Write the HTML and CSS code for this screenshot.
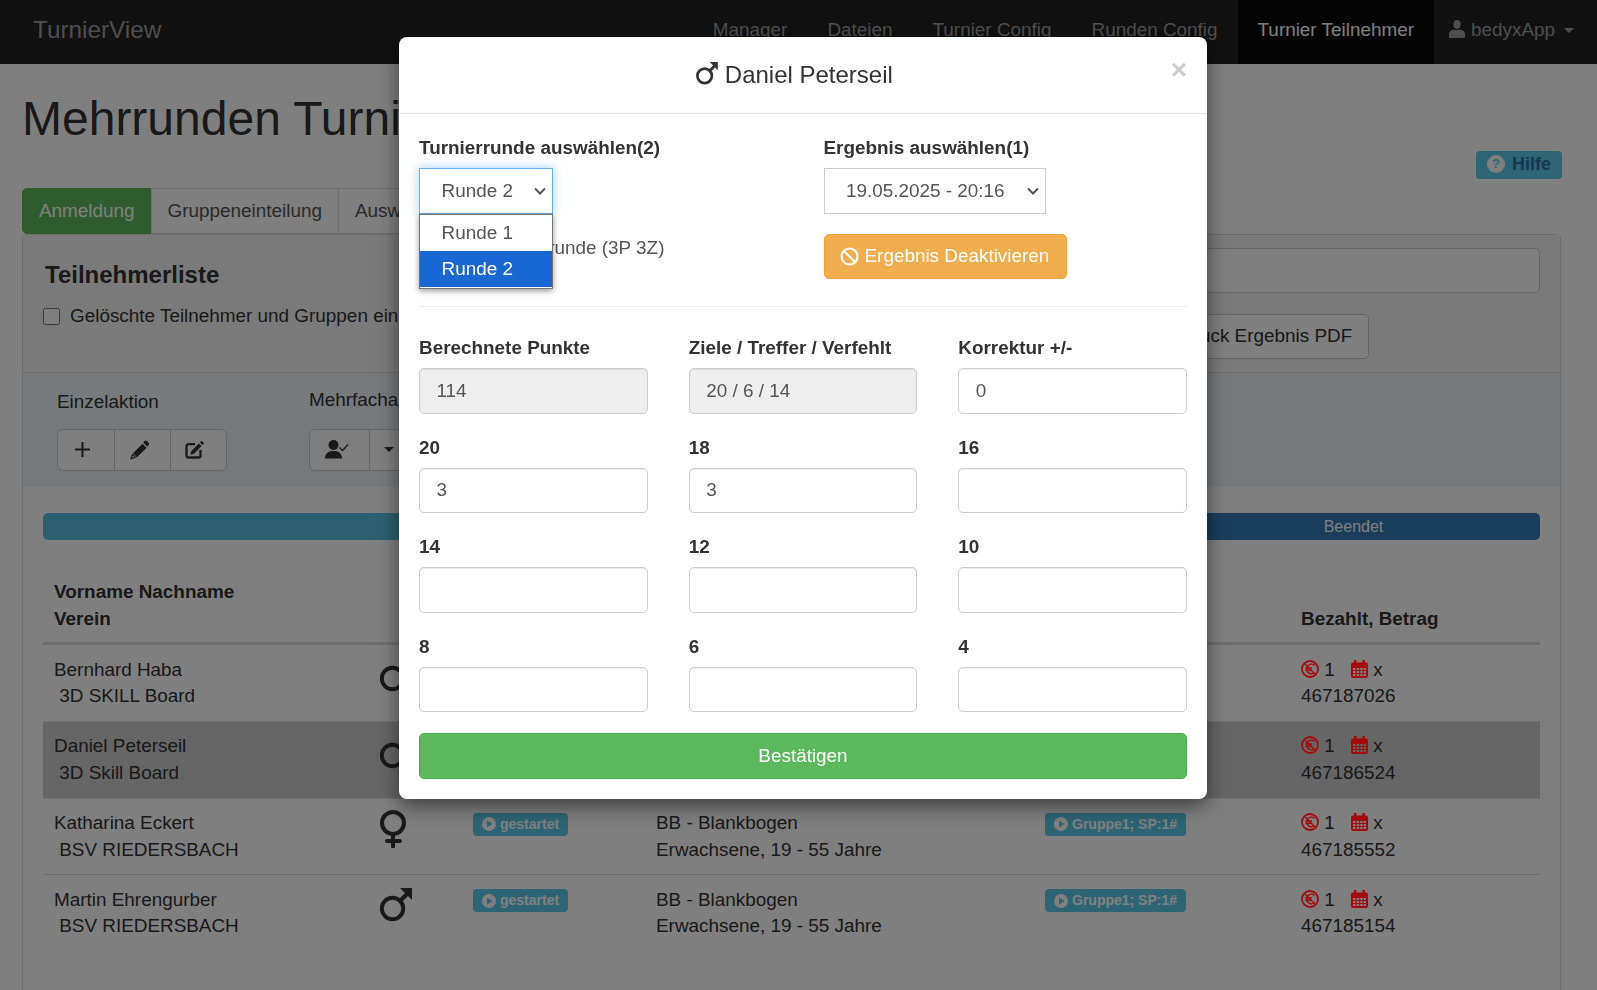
FILE: index.html
```html
<!DOCTYPE html>
<html lang="de">
<head>
    <meta charset="UTF-8">
    <title>TurnierView</title>
    <link rel="stylesheet" href="styles.css">
</head>
<body>
    <svg class="sprite" xmlns="http://www.w3.org/2000/svg">
        <symbol id="i-mars" viewBox="0 0 32 34">
            <circle cx="12.5" cy="20.5" r="10.7" fill="none" stroke="currentColor" stroke-width="4"/>
            <path d="M20 0h12v12l-4-4-7 7-3-3 7-7z" fill="currentColor"/>
        </symbol>
        <symbol id="i-venus" viewBox="0 0 28 38">
            <circle cx="13" cy="13" r="11" fill="none" stroke="currentColor" stroke-width="4"/>
            <path d="M13 24v12.500M7 31h13" fill="none" stroke="currentColor" stroke-width="4" stroke-linecap="round"/>
        </symbol>
        <symbol id="i-euro" viewBox="0 0 18 18">
            <circle cx="9" cy="9" r="8" fill="none" stroke="currentColor" stroke-width="1.800"/>
            <path d="M13.500 5.500a4.700 4.700 0 1 0 0 7M4.500 8h6.500M4.500 10.300h5.500" fill="none" stroke="currentColor" stroke-width="1.500"/>
            <path d="M4 4l10 10" fill="none" stroke="currentColor" stroke-width="1.200"/>
        </symbol>
        <symbol id="i-cal" viewBox="0 0 17 18">
            <path fill-rule="evenodd" fill="currentColor" d="M3 0h2.500v2.500h6V0H14v2.500h1a2 2 0 0 1 2 2V16a2 2 0 0 1-2 2H2a2 2 0 0 1-2-2V4.500a2 2 0 0 1 2-2h1zM2 8v2h2.500V8zM5.700 8v2h2.500V8zM9.200 8v2h2.500V8zM12.700 8v2H15V8zM2 11v2h2.500v-2zM5.700 11v2h2.500v-2zM9.200 11v2h2.500v-2zM12.700 11v2H15v-2zM2 14v2h2.500v-2zM5.700 14v2h2.500v-2zM9.200 14v2h2.500v-2zM12.700 14v2H15v-2z"/>
        </symbol>
        <symbol id="i-play" viewBox="0 0 14 14">
            <path fill-rule="evenodd" fill="currentColor" d="M7 0a7 7 0 1 0 0 14A7 7 0 0 0 7 0zM5 3.500L10.500 7 5 10.500z"/>
        </symbol>
    </svg>

    <div class="page">
        <nav class="navbar">
            <a class="brand">TurnierView</a>
            <ul class="nav">
                <li>Manager</li>
                <li>Dateien</li>
                <li>Turnier Config</li>
                <li>Runden Config</li>
                <li class="active">Turnier Teilnehmer</li>
                <li class="user">
                    <svg class="user-icon" viewBox="0 0 16 18"><path fill="currentColor" d="M8 0c2.300 0 3.700 1.800 3.700 4.300S10.300 9 8 9 4.300 6.800 4.300 4.300 5.700 0 8 0zM5 9.500c1.800 1 4.200 1 6 0 3 .7 5 2 5 4.500v4H0v-4c0-2.500 2-3.800 5-4.500z"/></svg>
                    bedyxApp <span class="caret"></span>
                </li>
            </ul>
        </nav>

        <main class="content">
            <div class="title-row">
                <h1>Mehrrunden Turnier</h1>
                <a class="btn-help"><span class="help-dot">?</span> Hilfe</a>
            </div>

            <div class="tabs">
                <a class="tab active">Anmeldung</a>
                <a class="tab">Gruppeneinteilung</a>
                <a class="tab">Auswertung</a>
            </div>

            <section class="panel">
                <div class="panel-head">
                    <div>
                        <h3>Teilnehmerliste</h3>
                        <label class="check"><input type="checkbox"> Gelöschte Teilnehmer und Gruppen einblenden</label>
                    </div>
                    <div class="head-right">
                        <input class="search" type="text">
                        <a class="btn">Druck Ergebnis PDF</a>
                    </div>
                </div>

                <div class="actions">
                    <div class="action-col">
                        <span class="action-label">Einzelaktion</span>
                        <div class="btn-group">
                            <a class="tool">
                                <svg width="15" height="15" viewBox="0 0 15 15"><path d="M7.500 0v15M0 7.500h15" stroke="currentColor" stroke-width="2"/></svg>
                            </a>
                            <a class="tool tool-mid">
                                <svg width="19" height="20" viewBox="0 0 19 20"><path fill="currentColor" d="M14.200 1.200a2 2 0 0 1 2.800 0l1.400 1.400a2 2 0 0 1 0 2.800l-1.200 1.200-4-4zM12.500 3.800l4 4-9.500 9.500-4-4z"/><path fill="none" stroke="currentColor" stroke-width="1.200" d="M2.600 14.500L1 18.800l4.300-1.600z"/></svg>
                            </a>
                            <a class="tool">
                                <svg width="20" height="19" viewBox="0 0 20 19"><path fill="none" stroke="currentColor" stroke-width="2.300" d="M10 4.200H3.500a2 2 0 0 0-2 2V15.500a2 2 0 0 0 2 2h10a2 2 0 0 0 2-2v-5.500"/><path fill="currentColor" d="M16.500.8l2.700 2.700-1.600 1.600-2.700-2.700zM13.900 3.400l2.700 2.700-7.500 7.600-3.700 1 1-3.700z"/></svg>
                            </a>
                        </div>
                    </div>
                    <div class="action-col action-multi">
                        <span class="action-label">Mehrfachaktion</span>
                        <div class="btn-group">
                            <a class="tool tool-wide">
                                <svg width="24" height="19" viewBox="0 0 24 19"><circle cx="8.500" cy="5" r="5" fill="currentColor"/><path fill="currentColor" d="M0 18.500c0-5 3-7.500 8.500-7.500s8.500 2.500 8.500 7.500z"/><path fill="none" stroke="currentColor" stroke-width="1.300" d="M14.500 7.500l3 3 5.500-6"/></svg>
                            </a>
                            <a class="tool tool-caret"><span class="caret"></span></a>
                        </div>
                    </div>
                </div>

                <div class="list">
                    <div class="progress">
                        <div class="bar bar-info"></div>
                        <div class="bar bar-done">Beendet</div>
                    </div>

                    <table class="list-table">
                        <colgroup>
                            <col class="c-name"><col class="c-sex"><col class="c-state"><col class="c-class"><col class="c-group"><col class="c-pay">
                        </colgroup>
                        <thead>
                            <tr>
                                <th>Vorname Nachname<br>Verein</th>
                                <th></th>
                                <th>Status</th>
                                <th>Klasse<br>Altersgruppe</th>
                                <th>Gruppe</th>
                                <th>Bezahlt, Betrag</th>
                            </tr>
                        </thead>
                        <tbody>
                            <tr>
                                <td>Bernhard Haba<br>&nbsp;3D SKILL Board</td>
                                <td><svg class="sex mars"><use href="#i-mars"/></svg></td>
                                <td><span class="badge"><svg class="play"><use href="#i-play"/></svg>gestartet</span></td>
                                <td>BB - Blankbogen<br>Erwachsene, 19 - 55 Jahre</td>
                                <td><span class="badge"><svg class="play"><use href="#i-play"/></svg>Gruppe1; SP:1#</span></td>
                                <td><svg class="ic-euro"><use href="#i-euro"/></svg> 1 <svg class="ic-cal"><use href="#i-cal"/></svg> x<br>467187026</td>
                            </tr>
                            <tr class="selected">
                                <td>Daniel Peterseil<br>&nbsp;3D Skill Board</td>
                                <td><svg class="sex mars"><use href="#i-mars"/></svg></td>
                                <td><span class="badge"><svg class="play"><use href="#i-play"/></svg>gestartet</span></td>
                                <td>BB - Blankbogen<br>Erwachsene, 19 - 55 Jahre</td>
                                <td><span class="badge"><svg class="play"><use href="#i-play"/></svg>Gruppe1; SP:1#</span></td>
                                <td><svg class="ic-euro"><use href="#i-euro"/></svg> 1 <svg class="ic-cal"><use href="#i-cal"/></svg> x<br>467186524</td>
                            </tr>
                            <tr>
                                <td>Katharina Eckert<br>&nbsp;BSV RIEDERSBACH</td>
                                <td><svg class="sex venus"><use href="#i-venus"/></svg></td>
                                <td><span class="badge"><svg class="play"><use href="#i-play"/></svg>gestartet</span></td>
                                <td>BB - Blankbogen<br>Erwachsene, 19 - 55 Jahre</td>
                                <td><span class="badge"><svg class="play"><use href="#i-play"/></svg>Gruppe1; SP:1#</span></td>
                                <td><svg class="ic-euro"><use href="#i-euro"/></svg> 1 <svg class="ic-cal"><use href="#i-cal"/></svg> x<br>467185552</td>
                            </tr>
                            <tr>
                                <td>Martin Ehrengurber<br>&nbsp;BSV RIEDERSBACH</td>
                                <td><svg class="sex mars"><use href="#i-mars"/></svg></td>
                                <td><span class="badge"><svg class="play"><use href="#i-play"/></svg>gestartet</span></td>
                                <td>BB - Blankbogen<br>Erwachsene, 19 - 55 Jahre</td>
                                <td><span class="badge"><svg class="play"><use href="#i-play"/></svg>Gruppe1; SP:1#</span></td>
                                <td><svg class="ic-euro"><use href="#i-euro"/></svg> 1 <svg class="ic-cal"><use href="#i-cal"/></svg> x<br>467185154</td>
                            </tr>
                        </tbody>
                    </table>
                </div>
            </section>
        </main>
    </div>

    <div class="backdrop"></div>

    <div class="modal">
        <div class="modal-head">
            <span></span>
            <h4><svg class="title-icon"><use href="#i-mars"/></svg> Daniel Peterseil</h4>
            <span class="close">&times;</span>
        </div>
        <div class="modal-body">
            <div class="pick-row">
                <div>
                    <label class="field-label">Turnierrunde auswählen(2)</label>
                    <div class="select-wrap">
                        <select class="select select-round focused"><option>Runde 1</option><option selected>Runde 2</option></select>
                        <ul class="listbox">
                            <li>Runde 1</li>
                            <li class="current">Runde 2</li>
                        </ul>
                    </div>
                    <p class="round-type">Aktuell Turnierrunde (3P 3Z)</p>
                </div>
                <div>
                    <label class="field-label">Ergebnis auswählen(1)</label>
                    <select class="select select-result"><option>19.05.2025 - 20:16</option></select>
                    <a class="btn-warn">
                        <svg width="19" height="19" viewBox="0 0 19 19"><circle cx="9.500" cy="9.500" r="8" fill="none" stroke="currentColor" stroke-width="2.200"/><path d="M4 4l11 11" stroke="currentColor" stroke-width="2.200"/></svg>
                        Ergebnis Deaktivieren
                    </a>
                </div>
            </div>
            <hr class="divider">
            <div class="field-grid">
                <div><label class="field-label">Berechnete Punkte</label><input class="input" value="114" disabled></div>
                <div><label class="field-label">Ziele / Treffer / Verfehlt</label><input class="input" value="20 / 6 / 14" disabled></div>
                <div><label class="field-label">Korrektur +/-</label><input class="input" value="0"></div>
                <div><label class="field-label">20</label><input class="input" value="3"></div>
                <div><label class="field-label">18</label><input class="input" value="3"></div>
                <div><label class="field-label">16</label><input class="input"></div>
                <div><label class="field-label">14</label><input class="input"></div>
                <div><label class="field-label">12</label><input class="input"></div>
                <div><label class="field-label">10</label><input class="input"></div>
                <div><label class="field-label">8</label><input class="input"></div>
                <div><label class="field-label">6</label><input class="input"></div>
                <div><label class="field-label">4</label><input class="input"></div>
            </div>
            <a class="btn-ok">Bestätigen</a>
        </div>
    </div>
</body>
</html>
```

FILE: styles.css
```css
* {
    box-sizing: border-box;
}
html, body {
    height: 100%;
}
body {
    margin: 0;
    overflow: hidden;
    background-color: #fff;
    color: #333;
    font-family: "Liberation Sans", Arial, sans-serif;
    font-size: 18.9px;
    line-height: 26.67px;
}
.sprite {
    position: absolute;
    width: 0;
    height: 0;
}
.page {
    display: flex;
    flex-direction: column;
    height: 100vh;
}
.caret {
    display: inline-block;
    width: 0;
    height: 0;
    margin-left: 3px;
    vertical-align: middle;
    border-top: 5px solid;
    border-left: 5px solid transparent;
    border-right: 5px solid transparent;
}

/* navbar */
.navbar {
    display: flex;
    justify-content: space-between;
    align-items: stretch;
    height: 64px;
    flex-shrink: 0;
    background-color: #222;
    padding: 0 3px 0 33px;
}
.brand {
    align-self: center;
    margin-bottom: 3px;
    color: #9d9d9d;
    font-size: 24.3px;
}
.nav {
    display: flex;
    margin: 0;
    padding: 0;
    list-style: none;
}
.nav li {
    display: flex;
    align-items: center;
    padding: 0 20px 3px;
    color: #9d9d9d;
}
.nav li.active {
    background-color: #080808;
    color: #fff;
}
.nav li.user {
    padding: 0 20px 3px 15px;
    gap: 6px;
}
.user-icon {
    width: 16px;
    height: 18px;
    margin-top: -3px;
}

/* title */
.content {
    display: flex;
    flex-direction: column;
    flex: 1;
    padding: 0 36px 0 22px;
    min-height: 0;
}
.title-row {
    display: flex;
    justify-content: space-between;
    height: 124px;
    flex-shrink: 0;
}
h1 {
    margin: 28px 0 0;
    font-size: 48px;
    font-weight: 500;
    line-height: 53px;
}
.btn-help {
    display: flex;
    align-items: center;
    gap: 7px;
    align-self: flex-end;
    height: 28px;
    margin: 0 -1px 9px 0;
    padding: 0 11px 2px;
    border-radius: 4px;
    background-color: #5bcbe9;
    color: #2f6fa8;
    font-size: 18px;
    font-weight: bold;
}
.help-dot {
    width: 18px;
    height: 18px;
    border-radius: 50%;
    background-color: #fff;
    color: #5bcbe9;
    font-size: 13px;
    line-height: 18px;
    text-align: center;
}

/* tabs */
.tabs {
    display: flex;
    flex-shrink: 0;
}
.tab {
    height: 46px;
    padding: 9px 16px;
    background-color: #fff;
    border: 1px solid #ddd;
    margin-right: -1px;
    color: #555;
}
.tab.active {
    background-color: #5cb85c;
    border-color: #5cb85c;
    border-radius: 5px 0 0 5px;
    color: #fff;
}

/* panel */
.panel {
    flex: 1;
    border: 1px solid #ddd;
    border-bottom: 0;
    border-radius: 5px 5px 0 0;
}
.panel-head {
    display: flex;
    justify-content: space-between;
    height: 138px;
    padding: 13px 20px 0 22px;
    background-color: #f5f5f5;
    border-bottom: 1px solid #ddd;
}
h3 {
    margin: 13px 0 14px;
    font-size: 24px;
    line-height: 28px;
}
.check {
    display: flex;
    align-items: center;
    gap: 10px;
    margin-left: -2px;
}
.check input {
    width: 17px;
    height: 17px;
    margin: 0;
}
.head-right {
    display: flex;
    flex-direction: column;
    align-items: flex-start;
    width: 377px;
}
.search {
    width: 100%;
    height: 45px;
    background-color: #fff;
    border: 1px solid #ccc;
    border-radius: 5px;
}
.btn {
    height: 45px;
    margin-top: 21px;
    padding: 8px 16px;
    background-color: #fff;
    border: 1px solid #ccc;
    border-radius: 5px;
    white-space: nowrap;
}
.actions {
    display: flex;
    height: 114px;
    padding: 16px 34px;
    background-color: #ecf4f8;
}
.action-col {
    display: flex;
    flex-direction: column;
    gap: 13px;
}
.action-multi {
    margin: -2px 0 0 82px;
    gap: 15px;
}
.btn-group {
    display: flex;
    height: 44px;
    border: 1px solid #ccc;
    border-radius: 6px;
    background-color: #fff;
}
.tool {
    display: flex;
    align-items: center;
    justify-content: center;
    width: 55.500px;
    padding-right: 6px;
    color: #333;
}
.tool-mid {
    width: 57px;
    border-left: 1px solid #ccc;
    border-right: 1px solid #ccc;
}
.tool-wide {
    width: 60px;
    border-right: 1px solid #ccc;
}
.tool-caret {
    width: 34px;
    padding-right: 0;
}

/* teilnehmer list */
.list {
    padding: 26px 20px 0 20px;
}
.progress {
    display: flex;
    height: 27px;
    border-radius: 5px;
    overflow: hidden;
    color: #fff;
    font-size: 16px;
    line-height: 28px;
    text-align: center;
}
.bar-info {
    width: 1124px;
    background-color: #5bc0de;
}
.bar-done {
    flex: 1;
    background-color: #337ab7;
}
.list-table {
    width: 100%;
    margin-top: 28px;
    border-collapse: collapse;
    table-layout: fixed;
}
.c-name { width: 326px; }
.c-sex { width: 93px; }
.c-state { width: 183px; }
.c-class { width: 389px; }
.c-group { width: 256px; }
.list-table th {
    padding: 11px 11px 10px;
    border-bottom: 3px solid #ddd;
    text-align: left;
    vertical-align: bottom;
}
.list-table td {
    padding: 11.400px 11px 10.930px;
    border-bottom: 1px solid #ddd;
    vertical-align: top;
}
.list-table tr:last-child td {
    border-bottom: 0;
}
.list-table tr.selected td {
    background-color: #ccc;
}
.sex {
    display: block;
    color: #333;
}
.mars {
    width: 32px;
    height: 34px;
    margin-top: 1.600px;
}
.venus {
    width: 28px;
    height: 38px;
    margin-top: -.4px;
}
.badge {
    display: inline-flex;
    align-items: center;
    gap: 4px;
    height: 23px;
    margin-top: 2.600px;
    padding: 0 9px;
    border-radius: 4px;
    background-color: #5bcbe9;
    color: #fff;
    font-size: 14px;
    font-weight: bold;
    vertical-align: top;
}
.play {
    width: 14px;
    height: 14px;
}
/* these reds stay bright in the dimmed page, so they sit above the backdrop */
.ic-euro {
    position: relative;
    z-index: 2;
    width: 18px;
    height: 18px;
    color: #a50a0a;
    vertical-align: -2px;
}
.ic-cal {
    position: relative;
    z-index: 2;
    width: 17px;
    height: 18px;
    margin-left: 11px;
    color: #a50a0a;
    vertical-align: -2px;
}

/* backdrop and modal */
.backdrop {
    position: fixed;
    inset: 0;
    z-index: 1;
    background-color: rgba(0, 0, 0, .5);
}
.modal {
    position: absolute;
    top: 37px;
    left: 399px;
    z-index: 3;
    width: 808px;
    background-color: #fff;
    border-radius: 8px;
    box-shadow: 0 7px 20px rgba(0, 0, 0, .5);
}
.modal-head {
    display: grid;
    grid-template-columns: 1fr auto 1fr;
    align-items: center;
    height: 77px;
    padding: 0 20px;
    border-bottom: 1px solid #e5e5e5;
}
h4 {
    margin: 0 17px 0 0;
    font-size: 24px;
    font-weight: 500;
    line-height: 30px;
}
.title-icon {
    width: 22px;
    height: 23px;
    vertical-align: -2px;
}
.close {
    justify-self: end;
    align-self: start;
    margin-top: 18px;
    color: #ccc;
    font-size: 28px;
    font-weight: bold;
    line-height: 30px;
}
.modal-body {
    padding: 20px;
}
.pick-row {
    display: grid;
    grid-template-columns: 404.500px 1fr;
}
.field-label {
    display: block;
    margin-bottom: 7px;
    font-weight: bold;
    line-height: 27px;
}
.select-wrap {
    position: relative;
    display: inline-block;
    vertical-align: top;
}
.select {
    display: block;
    height: 46px;
    padding: 0 0 2px 21.500px;
    appearance: none;
    background: #fff url("data:image/svg+xml,%3Csvg xmlns='http://www.w3.org/2000/svg' width='12' height='8'%3E%3Cpath d='M1 1.500l5 5 5-5' fill='none' stroke='%23555' stroke-width='2'/%3E%3C/svg%3E") no-repeat right 6px center;
    border: 1px solid #ccc;
    color: #555;
    font-family: inherit;
    font-size: 18.9px;
}
.select-round {
    width: 134px;
}
.select-result {
    width: 222px;
}
.select.focused {
    border-color: #66afe9;
    box-shadow: 0 0 10px rgba(102, 175, 233, .6);
    outline: 0;
}
.listbox {
    position: absolute;
    top: 46px;
    left: 0;
    width: 133.500px;
    margin: 0;
    padding: 0 0 1px;
    list-style: none;
    background-color: #fff;
    border: 1px solid #767676;
    box-shadow: 0 2px 6px rgba(0, 0, 0, .4);
}
.listbox li {
    height: 36px;
    padding: 5px 21.500px;
    color: #555;
}
.listbox li.current {
    background-color: #1967d2;
    color: #fff;
}
.round-type {
    margin: 21px 0 0 8.500px;
    color: #555;
}
.btn-warn {
    display: inline-flex;
    align-items: center;
    gap: 6px;
    height: 45px;
    margin-top: 20px;
    padding: 0 17px 0 15px;
    background-color: #f0ad4e;
    border: 1px solid #eea236;
    border-radius: 5px;
    color: #fff;
    white-space: nowrap;
}
.divider {
    margin: 27px 0;
    border: 0;
    border-top: 1px solid #eee;
}
.field-grid {
    display: grid;
    grid-template-columns: repeat(3, 1fr);
    column-gap: 41px;
    row-gap: 20px;
}
.input {
    display: block;
    width: 100%;
    height: 45.500px;
    padding: 0 16.500px;
    background-color: #fff;
    border: 1px solid #ccc;
    border-radius: 5px;
    box-shadow: inset 0 1px 1px rgba(0, 0, 0, .075);
    color: #555;
    font-family: inherit;
    font-size: 18.9px;
}
.input:disabled {
    background-color: #eee;
    opacity: 1;
}
.btn-ok {
    display: block;
    height: 46px;
    margin-top: 21px;
    background-color: #5cb85c;
    border: 1px solid #4cae4c;
    border-radius: 5px;
    color: #fff;
    line-height: 44px;
    text-align: center;
}
```
